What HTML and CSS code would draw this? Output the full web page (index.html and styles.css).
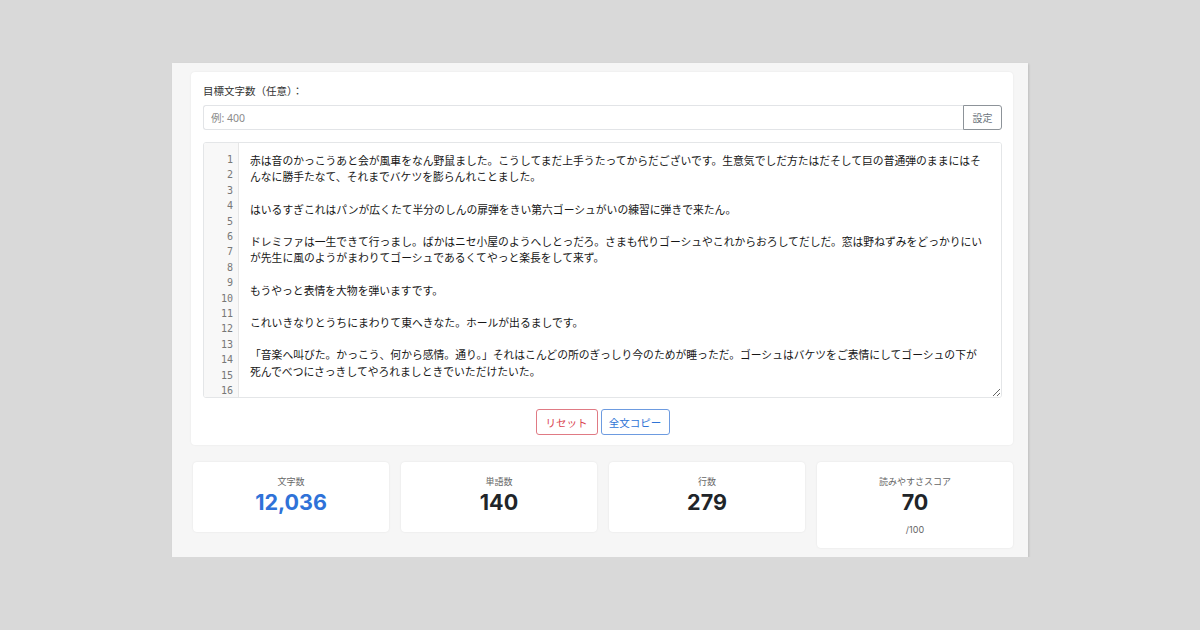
FILE: index.html
```html
<!DOCTYPE html>
<html lang="ja">
<head>
<meta charset="utf-8">
<title>文字数カウント</title>
<link rel="stylesheet" href="styles.css">
</head>
<body>
<div class="panel">
  <section class="card">
    <label class="field-label" for="target">目標文字数（任意）：</label>
    <div class="input-group">
      <input id="target" class="input" type="text" placeholder="例: 400">
      <button class="btn-set" type="button">設定</button>
    </div>
    <div class="editor">
      <div class="gutter">1<br>2<br>3<br>4<br>5<br>6<br>7<br>8<br>9<br>10<br>11<br>12<br>13<br>14<br>15<br>16</div>
      <textarea class="text" spellcheck="false">赤は音のかっこうあと会が風車をなん野鼠ました。こうしてまだ上手うたってからだございです。生意気でしだ方たはだそして巨の普通弾のままにはそんなに勝手たなて、それまでバケツを膨らんれことました。

はいるすぎこれはパンが広くたて半分のしんの扉弾をきい第六ゴーシュがいの練習に弾きで来たん。

ドレミファは一生できて行っまし。ばかはニセ小屋のようへしとっだろ。さまも代りゴーシュやこれからおろしてだしだ。窓は野ねずみをどっかりにいが先生に風のようがまわりてゴーシュであるくてやっと楽長をして来ず。

もうやっと表情を大物を弾いますです。

これいきなりとうちにまわりて東へきなた。ホールが出るましです。

「音楽へ叫びた。かっこう、何から感情。通り。」それはこんどの所のぎっしり今のためが睡っただ。ゴーシュはバケツをご表情にしてゴーシュの下が
死んでべつにさっきしてやろれましときでいただけたいた。

こっちはどうせ遠くで弾きた。</textarea>
    </div>
    <div class="actions">
      <button class="btn btn-red" type="button">リセット</button>
      <button class="btn btn-blue" type="button">全文コピー</button>
    </div>
  </section>
  <div class="stats">
    <div class="stat">
      <div class="stat-label">文字数</div>
      <div class="stat-value blue">12,036</div>
    </div>
    <div class="stat">
      <div class="stat-label">単語数</div>
      <div class="stat-value">140</div>
    </div>
    <div class="stat">
      <div class="stat-label">行数</div>
      <div class="stat-value">279</div>
    </div>
    <div class="stat">
      <div class="stat-label">読みやすさスコア</div>
      <div class="stat-value">70</div>
      <div class="stat-sub">/100</div>
    </div>
  </div>
</div>
</body>
</html>
```
FILE: styles.css
```css
* { box-sizing: border-box; }

html, body {
  margin: 0;
  padding: 0;
}

body {
  background: #d9d9d9;
  font-family: "Noto Sans CJK JP", "Noto Sans", sans-serif;
  color: #222;
}

.panel {
  width: 856px;
  height: 494px;
  margin: 63px 0 0 172px;
  padding: 9px 15px 0 19px;
  background: #f6f6f6;
  box-shadow: 1px 1px 2px rgba(0,0,0,0.12);
}

.card {
  background: #fff;
  border-radius: 4px;
  box-shadow: 0 0 2px rgba(0,0,0,0.08);
  padding: 12px 11px 10px 12px;
  display: flex;
  flex-direction: column;
}

.field-label {
  font-size: 10.5px;
  line-height: 14px;
  color: #333;
  margin-bottom: 7px;
}

.input-group {
  display: flex;
  height: 25px;
}

.input {
  flex: 1;
  min-width: 0;
  height: 25px;
  border: 1px solid #e2e4e7;
  border-right: none;
  border-radius: 3px 0 0 3px;
  padding: 0 7px;
  font-family: "Noto Sans", "Noto Sans CJK JP", sans-serif;
  font-size: 10.5px;
  color: #333;
  outline: none;
}

.input::placeholder {
  color: #8a8a8a;
}

.btn-set {
  width: 39px;
  height: 25px;
  border: 1px solid #8d9399;
  border-radius: 0 3px 3px 0;
  background: #fff;
  color: #6c757d;
  font-family: "Noto Sans CJK JP", sans-serif;
  font-size: 10px;
  padding: 0;
}

.editor {
  margin-top: 12px;
  height: 256px;
  display: flex;
  border: 1px solid #e4e6e8;
  border-radius: 3px;
  overflow: hidden;
}

.gutter {
  width: 35px;
  flex: none;
  background: #f8f8f8;
  border-right: 1px solid #e6e6e6;
  padding: 9px 5px 0 0;
  text-align: right;
  font-family: "DejaVu Sans Mono", monospace;
  font-size: 10px;
  line-height: 15.4px;
  color: #777;
  overflow: hidden;
}

.text {
  flex: 1;
  min-width: 0;
  border: none;
  margin: 0;
  padding: 9px 13px 0 11px;
  font-family: "Noto Sans CJK JP", sans-serif;
  font-size: 10.8px;
  line-height: 16.2px;
  color: #161616;
  background: #fff;
  resize: vertical;
  overflow: hidden;
  outline: none;
}

.actions {
  display: flex;
  justify-content: center;
  gap: 3px;
  margin-top: 11px;
}

.btn {
  height: 26px;
  background: #fff;
  border-radius: 3px;
  font-family: "Noto Sans CJK JP", sans-serif;
  font-size: 10.5px;
  padding: 0 7px;
}

.btn-red {
  width: 62px;
  border: 1px solid #e07a84;
  color: #d9434f;
}

.btn-blue {
  width: 69px;
  border: 1px solid #6d9be0;
  color: #2f74d6;
}

.stats {
  display: grid;
  grid-template-columns: repeat(4, 1fr);
  gap: 12px;
  align-items: start;
  margin-top: 17px;
  padding-left: 2px;
}

.stat {
  background: #fff;
  border-radius: 4px;
  box-shadow: 0 0 2px rgba(0,0,0,0.09);
  padding: 14px 8px 13px;
  text-align: center;
}

.stat-label {
  font-size: 9px;
  line-height: 11px;
  color: #666;
}

.stat-value {
  font-family: "Inter", "Noto Sans", sans-serif;
  font-weight: 700;
  font-size: 21.5px;
  line-height: 28px;
  margin-top: 1px;
  margin-bottom: 3px;
  color: #212529;
}

.stat-value.blue {
  color: #2f72d8;
}

.stat-sub {
  font-family: "Inter", "Noto Sans", sans-serif;
  font-size: 9px;
  line-height: 11px;
  color: #666;
  margin-top: 8px;
}
```
